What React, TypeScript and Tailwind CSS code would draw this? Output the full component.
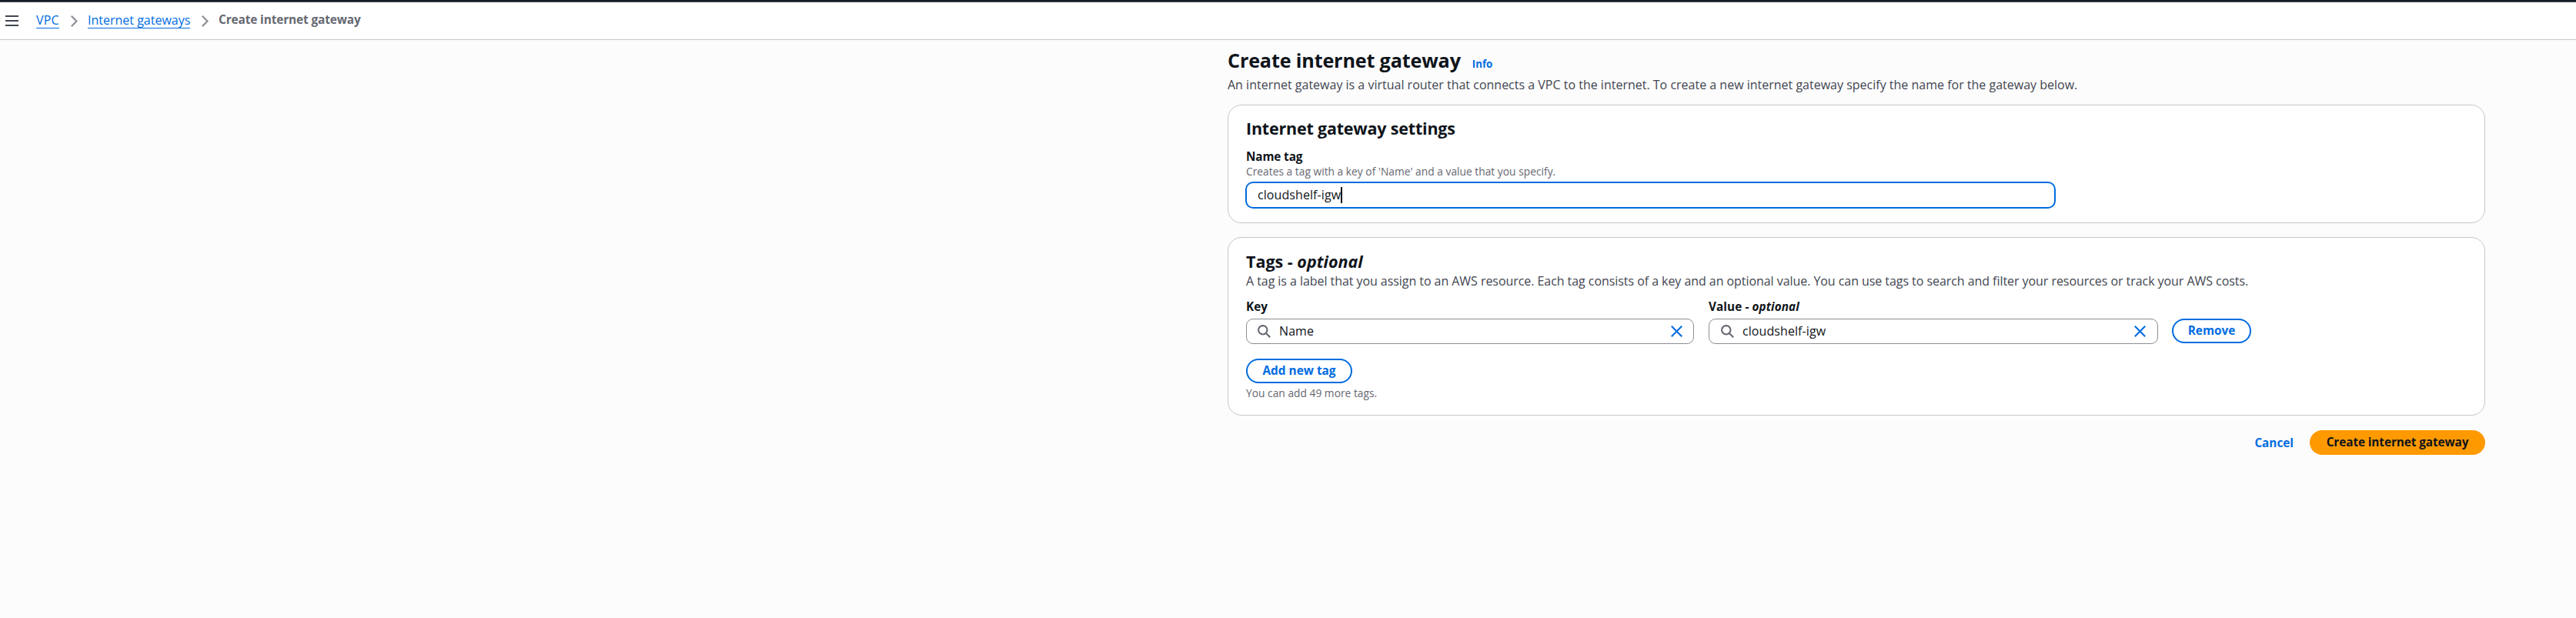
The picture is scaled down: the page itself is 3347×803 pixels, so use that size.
import type { ReactNode } from 'react';

const SearchIcon = () => (
  <svg className="h-[17px] w-[17px] shrink-0" viewBox="0 0 17 17" fill="none" stroke="#656871" strokeWidth="2.1">
    <circle cx="6.8" cy="6.8" r="5.7" />
    <path d="M10.9 10.9L16.2 16.2" />
  </svg>
);

const CloseIcon = () => (
  <svg className="h-[15px] w-[15px] shrink-0" viewBox="0 0 15 15" fill="none" stroke="#006ce0" strokeWidth="2.1">
    <path d="M0.8 0.8L14.2 14.2M14.2 0.8L0.8 14.2" />
  </svg>
);

const Chevron = () => (
  <svg className="mt-1 h-[15px] w-[9px] shrink-0" viewBox="0 0 9 15" fill="none" stroke="#8c8c94" strokeWidth="2.1">
    <path d="M0.8 0.8L7.5 7.5L0.8 14.2" />
  </svg>
);

const Card = ({ className, children }: { className: string; children: ReactNode }) => (
  <section className={`rounded-[18px] border border-[#c6c6cd] bg-white pr-[23px] pl-[23px] ${className}`}>
    {children}
  </section>
);

const TagInput = ({ value, className }: { value: string; className: string }) => (
  <div className={`mt-[6px] flex h-[33px] items-center rounded-[9px] border border-[#8c8c94] bg-white ${className}`}>
    <SearchIcon />
    <span className="ml-[11px] flex-1 pb-px text-base leading-5 tracking-[0.08px]">{value}</span>
    <CloseIcon />
  </div>
);

export default function App() {
  return (
    <div className="h-[803px] w-[3347px] overflow-hidden bg-[#fcfcfd] font-['Open_Sans','Noto_Sans',sans-serif] whitespace-nowrap text-[#0f141a]">
      <div className="h-[3px] border-b border-[#424650] bg-[#161d26]" />
      <header className="flex h-[49px] items-start border-b border-[#c6c6cd] bg-white pt-[13px] pl-[7px]">
        <svg className="mt-1 h-[14px] w-[17px] shrink-0" viewBox="0 0 17 14" fill="none" stroke="#424650" strokeWidth="2">
          <path d="M0 1H17M0 7H17M0 13H17" />
        </svg>
        <a className="ml-[23px] h-[21px] w-[30px] border-b border-[#006ce0] text-base leading-5 tracking-[0.15px] text-[#006ce0]">VPC</a>
        <div className="ml-[15px] flex"><Chevron /></div>
        <a className="ml-[13px] h-[21px] w-[133px] border-b border-[#006ce0] text-base leading-5 text-[#006ce0]">Internet gateways</a>
        <div className="ml-[15px] flex"><Chevron /></div>
        <span className="ml-[13px] text-[15.4px] leading-5 font-bold tracking-[-0.12px] text-[#656871]">Create internet gateway</span>
      </header>

      <main className="ml-[1595px] w-[1634px] pt-[11px]">
        <div className="flex items-baseline">
          <h1 className="text-[25.2px] leading-[30px] font-bold tracking-[-0.17px]">Create internet gateway</h1>
          <a className="ml-[15px] text-[13.3px] leading-5 font-bold text-[#006ce0]">Info</a>
        </div>
        <p className="mt-[7px] text-base leading-5 text-[#424650]">
          An internet gateway is a virtual router that connects a VPC to the internet. To create a new internet gateway specify the name for the gateway below.
        </p>

        <Card className="mt-4 h-[154px] pt-[18px]">
          <h2 className="text-[21.5px] leading-6 font-bold tracking-[-0.2px]">Internet gateway settings</h2>
          <div className="mt-[14px] text-[15.3px] leading-5 font-bold tracking-[-0.12px]">Name tag</div>
          <div className="mt-[2px] text-[13.8px] leading-4 text-[#656871]">Creates a tag with a key of 'Name' and a value that you specify.</div>
          <div className="mt-[5px] -ml-px flex h-[35px] w-[1053px] items-center rounded-[10px] border-2 border-[#006ce0] bg-white pl-[14px]">
            <span className="pb-px text-base leading-5 tracking-[0.08px]">cloudshelf-igw</span>
            <span className="h-[21px] w-[2px] bg-[#0f141a]" />
          </div>
        </Card>

        <Card className="mt-[18px] h-[232px] pt-[19px]">
          <h2 className="text-[21.5px] leading-6 font-bold">
            Tags - <span className="italic">optional</span>
          </h2>
          <p className="mt-[3px] text-base leading-5 tracking-[-0.057px] text-[#424650]">
            A tag is a label that you assign to an AWS resource. Each tag consists of a key and an optional value. You can use tags to search and filter your resources or track your AWS costs.
          </p>
          <div className="mt-[13px] flex">
            <div className="w-[582px]">
              <div className="text-[15.3px] leading-5 font-bold">Key</div>
              <TagInput value="Name" className="pr-[14px] pl-[14px]" />
            </div>
            <div className="ml-[19px] w-[584px]">
              <div className="text-[15.3px] leading-5 font-bold tracking-[0.08px]">
                Value - <span className="italic">optional</span>
              </div>
              <TagInput value="cloudshelf-igw" className="pr-[15px] pl-[15px]" />
            </div>
            <button className="mt-[26px] ml-[18px] flex h-8 w-[103px] items-center justify-center rounded-full border-2 border-[#006ce0] bg-white text-[15.4px] leading-5 font-bold text-[#006ce0]">
              Remove
            </button>
          </div>
          <button className="mt-[19px] flex h-8 w-[138px] items-center justify-center rounded-full border-2 border-[#006ce0] bg-white text-[15.4px] leading-5 font-bold text-[#006ce0]">
            Add new tag
          </button>
          <div className="mt-[5px] text-[13.8px] leading-4 text-[#656871]">You can add 49 more tags.</div>
        </Card>

        <div className="mt-[19px] flex h-8 items-center justify-end">
          <button className="mr-[21px] text-[15.3px] leading-5 font-bold text-[#006ce0]">Cancel</button>
          <button className="flex h-8 w-[228px] items-center justify-center rounded-full bg-[#ff9900] text-[15.4px] leading-5 font-bold tracking-[-0.12px]">
            Create internet gateway
          </button>
        </div>
      </main>
    </div>
  );
}
